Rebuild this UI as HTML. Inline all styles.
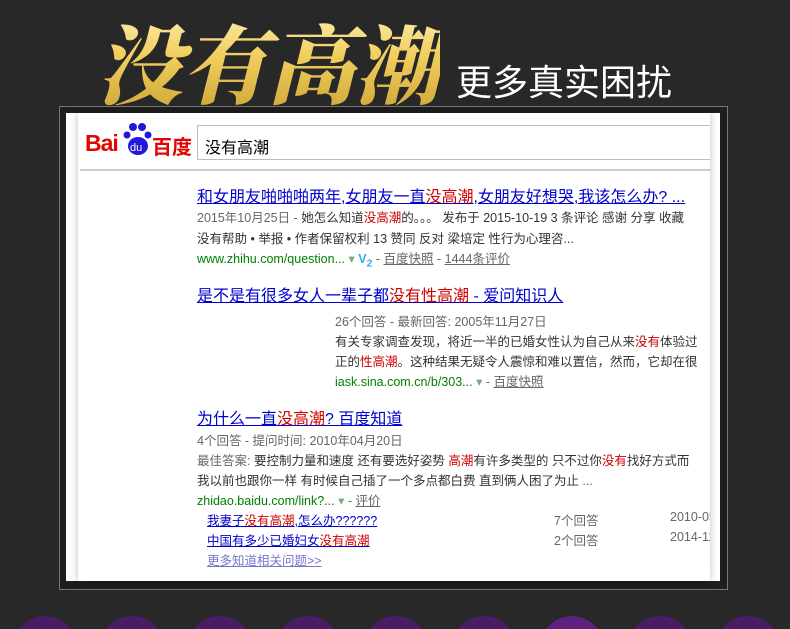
<!DOCTYPE html>
<html><head><meta charset="utf-8"><style>
*{margin:0;padding:0;box-sizing:border-box}
html,body{width:790px;height:629px;overflow:hidden}
body{background:#282828;position:relative;font-family:"Liberation Sans","Noto Sans CJK SC",sans-serif}
.t{position:absolute;white-space:nowrap}
.big{left:96px;top:-2px;font-family:"Noto Serif CJK SC",serif;font-weight:900;font-size:86px;font-style:italic;letter-spacing:0px;background:linear-gradient(180deg,#fff6c8 0%,#f2d060 45%,#c8a030 100%);-webkit-background-clip:text;color:transparent}
.sub{left:456px;top:54px;font-size:36px;color:#fff}
.panel{position:absolute;left:59px;top:106px;width:669px;height:484px;border:1px solid #777;background:#1e1e1e}
.white{position:absolute;left:66px;top:113px;width:654px;height:468px;background:#fff;overflow:hidden}
.card{position:absolute;left:78px;top:113px;width:632px;height:468px;box-shadow:0 0 8px rgba(0,0,0,.25);background:#fff;overflow:hidden}
.u{text-decoration:underline}
.b{color:#0000cc}
.r{color:#c00}
.g{color:#666}
.gr{color:#008000}
.k{color:#333}
.f16{font-size:16px}
.f13{font-size:12.5px}
</style></head><body>
<div class="t big">没有高潮</div>
<div class="t sub">更多真实困扰</div>
<div class="panel"></div>
<div class="white"></div>
<div class="card">
 <div class="t" style="left:7px;top:17px;font-size:23px;font-weight:bold;color:#e10601;letter-spacing:-1px">Bai</div>
 <div class="t" style="left:45px;top:8px">
  <svg width="30" height="36" viewBox="0 0 30 36"><circle cx="10" cy="6" r="4" fill="#2319dc"/><circle cx="19" cy="6" r="4" fill="#2319dc"/><circle cx="4" cy="14" r="3.5" fill="#2319dc"/><circle cx="25" cy="14" r="3.5" fill="#2319dc"/><ellipse cx="15" cy="25" rx="10" ry="9" fill="#2319dc"/><text x="7" y="30" font-size="11" fill="#fff" font-family="Liberation Sans">du</text></svg>
 </div>
 <div class="t" style="left:74px;top:18px;font-size:20px;font-weight:bold;color:#e10601">百度</div>
 <div style="position:absolute;left:119px;top:12px;width:520px;height:35px;border:1px solid #bbb"></div>
 <div class="t" style="left:127px;top:21px;font-size:16px;color:#000">没有高潮</div>
 <div style="position:absolute;left:2px;top:56px;width:630px;height:2px;background:#ccc"></div>

 <div class="t f16 b" style="left:119px;top:70px"><span class="u">和女朋友啪啪啪两年,女朋友一直<span class="r">没高潮</span>,女朋友好想哭,我该怎么办? ...</span></div>
 <div class="t f13 k" style="left:119px;top:94px"><span class="g">2015年10月25日 - </span>她怎么知道<span class="r">没高潮</span>的。。。 发布于 2015-10-19 3 条评论 感谢 分享 收藏</div>
 <div class="t f13 k" style="left:119px;top:115px">没有帮助 • 举报 • 作者保留权利 13 赞同 反对 梁培定 性行为心理咨...</div>
 <div class="t f13" style="left:119px;top:135px"><span class="gr">www.zhihu.com/question...</span> <span style="color:#7a7">▾</span> <span style="color:#3ae;font-weight:bold">V<sub>2</sub></span> <span class="g">- <span class="u">百度快照</span> - <span class="u">1444条评价</span></span></div>

 <div class="t f16 b" style="left:119px;top:169px"><span class="u">是不是有很多女人一辈子都<span class="r">没有性高潮</span> - 爱问知识人</span></div>
 <div class="t f13 g" style="left:257px;top:198px">26个回答 - 最新回答: 2005年11月27日</div>
 <div class="t f13 k" style="left:257px;top:218px">有关专家调查发现，将近一半的已婚女性认为自己从来<span class="r">没有</span>体验过</div>
 <div class="t f13 k" style="left:257px;top:238px">正的<span class="r">性高潮</span>。这种结果无疑令人震惊和难以置信，然而，它却在很</div>
 <div class="t f13" style="left:257px;top:258px"><span class="gr">iask.sina.com.cn/b/303...</span> <span style="color:#7a7">▾</span> <span class="g">- <span class="u">百度快照</span></span></div>

 <div class="t f16 b" style="left:119px;top:292px"><span class="u">为什么一直<span class="r">没高潮</span>? 百度知道</span></div>
 <div class="t f13 g" style="left:119px;top:317px">4个回答 - 提问时间: 2010年04月20日</div>
 <div class="t f13 k" style="left:119px;top:337px"><span class="g">最佳答案: </span>要控制力量和速度 还有要选好姿势 <span class="r">高潮</span>有许多类型的 只不过你<span class="r">没有</span>找好方式而</div>
 <div class="t f13 k" style="left:119px;top:357px">我以前也跟你一样 有时候自己插了一个多点都白费 直到俩人困了为止 <span style="color:#36c">...</span></div>
 <div class="t f13" style="left:119px;top:377px"><span class="gr">zhidao.baidu.com/link?...</span> <span style="color:#7a7">▾</span> <span class="g">- <span class="u">评价</span></span></div>
 <div class="t f13 b" style="left:129px;top:397px"><span class="u">我妻子<span class="r">没有高潮</span>,怎么办??????</span></div>
 <div class="t f13 g" style="left:476px;top:397px">7个回答</div>
 <div class="t f13 g" style="left:592px;top:397px">2010-05</div>
 <div class="t f13 b" style="left:129px;top:417px"><span class="u">中国有多少已婚妇女<span class="r">没有高潮</span></span></div>
 <div class="t f13 g" style="left:476px;top:417px">2个回答</div>
 <div class="t f13 g" style="left:592px;top:417px">2014-11</div>
 <div class="t f13" style="left:129px;top:437px;color:#77c"><span class="u">更多知道相关问题&gt;&gt;</span></div>
</div>
<svg style="position:absolute;left:0;top:600px;display:block" width="790" height="29">
 <g fill="#4a1c66">
  <ellipse cx="45" cy="58" rx="36" ry="42"/><ellipse cx="132" cy="58" rx="36" ry="42"/><ellipse cx="220" cy="58" rx="36" ry="42"/><ellipse cx="308" cy="58" rx="36" ry="42"/><ellipse cx="396" cy="58" rx="36" ry="42"/><ellipse cx="484" cy="58" rx="36" ry="42"/><ellipse cx="572" cy="58" rx="36" ry="42" fill="#5e2180"/><ellipse cx="660" cy="58" rx="36" ry="42"/><ellipse cx="748" cy="58" rx="36" ry="42"/>
 </g>
</svg>
</body></html>
